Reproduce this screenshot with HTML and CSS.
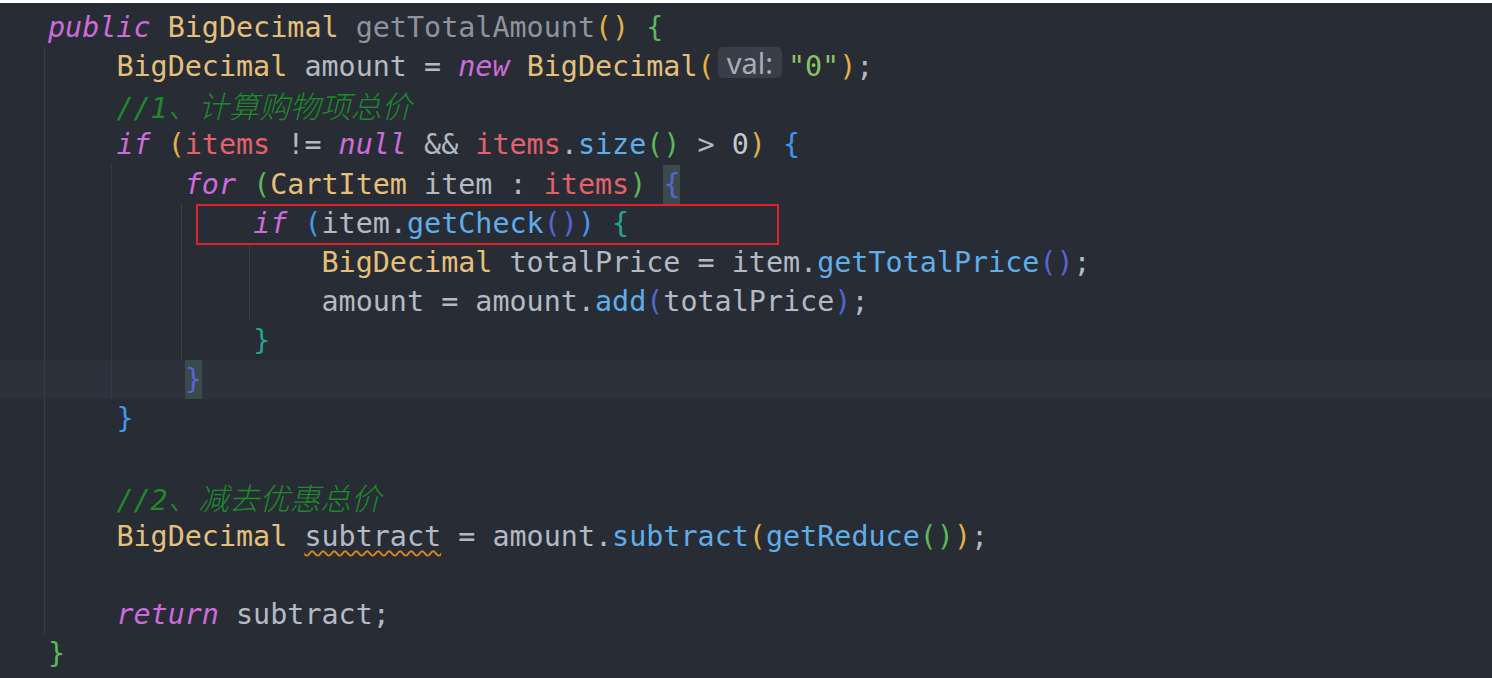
FILE: index.html
```html
<!DOCTYPE html>
<html lang="zh">
<head>
<meta charset="utf-8">
<title>getTotalAmount</title>
<link rel="stylesheet" href="styles.css">
</head>
<body>
<div class="editor">
  <div class="line"><span class="kw">public</span> <span class="cls">BigDecimal</span> <span class="dim">getTotalAmount</span><span class="p1">()</span> <span class="p2">{</span></div>
  <div class="line">    <span class="cls">BigDecimal</span> amount = <span class="kw">new</span> <span class="cls">BigDecimal</span><span class="p1">(</span><span class="hint">val:</span><span class="str">"0"</span><span class="p1">)</span>;</div>
  <div class="line">    <span class="cm">//1<span class="cjk">、计算购物项总价</span></span></div>
  <div class="line">    <span class="kw">if</span> <span class="p1">(</span><span class="fld">items</span> != <span class="kw">null</span> &amp;&amp; <span class="fld">items</span>.<span class="fn">size</span><span class="p2">()</span> &gt; <span class="num">0</span><span class="p1">)</span> <span class="p3">{</span></div>
  <div class="line">        <span class="kw">for</span> <span class="p2">(</span><span class="cls">CartItem</span> item : <span class="fld">items</span><span class="p2">)</span> <span class="p4 match">{</span></div>
  <div class="line">            <span class="kw">if</span> <span class="p3">(</span>item.<span class="fn">getCheck</span><span class="p4">()</span><span class="p3">)</span> <span class="p5">{</span></div>
  <div class="line">                <span class="cls">BigDecimal</span> totalPrice = item.<span class="fn">getTotalPrice</span><span class="p4">()</span>;</div>
  <div class="line">                amount = amount.<span class="fn">add</span><span class="p4">(</span>totalPrice<span class="p4">)</span>;</div>
  <div class="line">            <span class="p5">}</span></div>
  <div class="line current">        <span class="p4 match">}</span></div>
  <div class="line">    <span class="p3">}</span></div>
  <div class="line"> </div>
  <div class="line">    <span class="cm">//2<span class="cjk">、减去优惠总价</span></span></div>
  <div class="line">    <span class="cls">BigDecimal</span> <span class="warn">subtract</span> = amount.<span class="fn">subtract</span><span class="p1">(</span><span class="fn">getReduce</span><span class="p2">()</span><span class="p1">)</span>;</div>
  <div class="line"> </div>
  <div class="line">    <span class="kw">return</span> subtract;</div>
  <div class="line"><span class="p2">}</span></div>

  <div class="guide g1"></div>
  <div class="guide g2"></div>
  <div class="guide g3"></div>
  <div class="guide g4"></div>
  <div class="mark"></div>
</div>
</body>
</html>
```

FILE: styles.css
```css
html, body {
  margin: 0;
  padding: 0;
  background: #ffffff;
}

.editor {
  position: relative;
  box-sizing: border-box;
  width: 1492px;
  height: 678px;
  border-top: 3px solid #ffffff;
  padding-top: 5px;
  background: #282c34;
  overflow: hidden;
  font-family: "DejaVu Sans Mono", "Noto Sans CJK SC", monospace;
  font-size: 28.4px;
  color: #b4bac4;
}

.line {
  height: 39.125px;
  line-height: 39.125px;
  padding-left: 48px;
  white-space: pre;
}

.line.current {
  background: #2c313c;
}

.kw { color: #cd6bdc; font-style: italic; }
.cls { color: #e5c07b; }
.dim { color: #8e949e; }
.fn { color: #5fade9; }
.fld { color: #e0626d; }
.str { color: #8cc265; }
.num { color: #c4c9d1; }
.cm { color: #1d8a2b; font-style: italic; }
.cjk { font-family: "Noto Sans CJK SC", sans-serif; font-size: 30.5px; font-weight: 300; }

.p1 { color: #e2b04a; }
.p2 { color: #5cb85a; }
.p3 { color: #3f98ea; }
.p4 { color: #5466d4; }
.p5 { color: #27a290; }

.match {
  display: inline-block;
  background: #3b4a4a;
  height: 39.125px;
}

.hint {
  display: inline-block;
  height: 31px;
  line-height: 31px;
  margin: 0 6px 0 3px;
  padding: 0 9px;
  border-radius: 5px;
  background: #393e49;
  color: #a6adb8;
  font-family: "Noto Sans", sans-serif;
  font-size: 29px;
  vertical-align: 2px;
}

.warn {
  text-decoration: underline wavy #d5891c;
  text-decoration-thickness: 1.5px;
  text-underline-offset: 4px;
}

.guide {
  position: absolute;
  width: 1px;
}
.g1 { left: 44px; top: 44px; height: 587px; background: #34423a; }
.g2 { left: 111px; top: 161px; height: 235px; background: #2f3b4e; }
.g3 { left: 181px; top: 200px; height: 157px; background: #33423d; }
.g4 { left: 249px; top: 240px; height: 78px; background: #2e4444; }

.mark {
  position: absolute;
  left: 196px;
  top: 201px;
  width: 583px;
  height: 41px;
  box-sizing: border-box;
  border: 2px solid #e0222a;
}
```
